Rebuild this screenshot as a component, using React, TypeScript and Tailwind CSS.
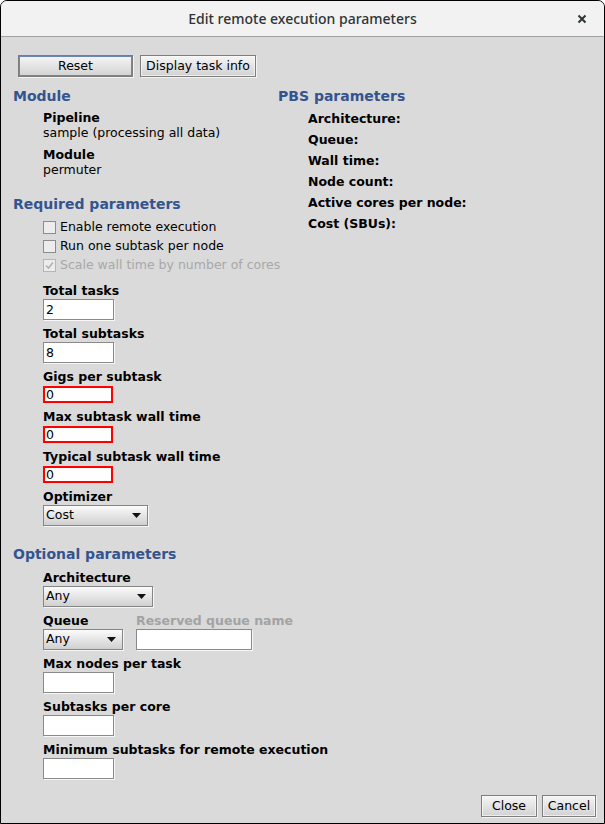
import React from "react";

const font = "font-['DejaVu_Sans','Liberation_Sans',sans-serif]";

function Heading({ children }: { children: React.ReactNode }) {
  return (
    <div className="h-[18px] leading-[18px] text-[14px] text-[#34548f] font-bold whitespace-nowrap">
      {children}
    </div>
  );
}

function Label({
  children,
  disabled,
  className = "",
}: {
  children: React.ReactNode;
  disabled?: boolean;
  className?: string;
}) {
  return (
    <div
      className={`h-[14px] leading-[14px] text-[12.5px] font-bold whitespace-nowrap ${
        disabled ? "text-[#a3a3a3]" : "text-black"
      } ${className}`}
    >
      {children}
    </div>
  );
}

function Button({ children, focused, className = "" }: { children: React.ReactNode; focused?: boolean; className?: string }) {
  return (
    <div
      className={`h-[22px] border border-[#7d7d7d] shadow-[1px_1px_0_#f4f4f4] bg-gradient-to-b from-[#f6f6f6] to-[#d2d2d2] flex items-center justify-center text-[12.5px] text-black whitespace-nowrap ${className}`}
    >
      <div
        className={`w-full h-full flex items-center justify-center ${
          focused ? "border border-[#6d86b8]" : "border border-[#fafafa]/70"
        }`}
      >
        {children}
      </div>
    </div>
  );
}

function TextBox({ value = "", w = "w-[71px]", error }: { value?: string; w?: string; error?: boolean }) {
  if (error) {
    return (
      <div className="mt-[2px] w-[70px] h-[17px] border-2 border-[#ff0000] bg-white text-[12.5px] leading-[13px] pl-[1px] text-black">
        {value}
      </div>
    );
  }
  return (
    <div
      className={`mt-[1px] ${w} h-[21px] border border-[#8a8a8a] shadow-[1px_1px_0_#f8f8f8] bg-white text-[12.5px] leading-[19px] pl-[2px] text-black`}
    >
      {value}
    </div>
  );
}

function Combo({ value, w }: { value: string; w: string }) {
  return (
    <div
      className={`mt-[1px] ${w} h-[21px] border border-[#858585] shadow-[1px_1px_0_#f6f6f6] bg-gradient-to-b from-[#fbfbfb] to-[#d0d0d0] flex items-center justify-between pl-[2px] pr-[6px] text-[12.5px] text-black`}
    >
      <span>{value}</span>
      <svg width="9" height="5" viewBox="0 0 9 5">
        <path d="M0 0h9L4.5 5z" fill="#111" />
      </svg>
    </div>
  );
}

function Check({ label, checked, disabled }: { label: string; checked?: boolean; disabled?: boolean }) {
  return (
    <div className="h-[19px] flex items-center whitespace-nowrap">
      <div
        className={`w-[13px] h-[13px] shrink-0 border ${
          disabled ? "border-[#b5b5b5]" : "border-[#8c8c8c]"
        } bg-[#ececec] flex items-center justify-center`}
      >
        {checked && (
          <svg width="11" height="11" viewBox="0 0 11 11">
            <path d="M2 5.5l2.5 2.5L9 2.5" stroke="#b0b0b0" strokeWidth="1.6" fill="none" />
          </svg>
        )}
      </div>
      <span className={`ml-[4px] text-[12.5px] ${disabled ? "text-[#a8a8a8]" : "text-black"}`}>{label}</span>
    </div>
  );
}

function Field({
  label,
  mt = "mt-[7px]",
  children,
}: {
  label: string;
  mt?: string;
  children: React.ReactNode;
}) {
  return (
    <div className={mt}>
      <Label>{label}</Label>
      {children}
    </div>
  );
}

const pbs = ["Architecture:", "Queue:", "Wall time:", "Node count:", "Active cores per node:", "Cost (SBUs):"];

export default function App() {
  return (
    <div
      className={`w-[605px] h-[824px] border border-black rounded-t-[7px] overflow-hidden bg-[#dadada] flex flex-col ${font}`}
    >
      <div className="h-[36px] shrink-0 bg-[#f2f2f2] border-b border-[#a2a2a2] relative flex items-center justify-center">
        <span className="font-['Noto_Sans',sans-serif] text-[14px] font-medium text-[#2e3436]">
          Edit remote execution parameters
        </span>
        <svg className="absolute right-[17px] top-[13px]" width="10" height="10" viewBox="0 0 10 10">
          <path d="M1.5 1.5l7 7M8.5 1.5l-7 7" stroke="#2e3436" strokeWidth="2" />
        </svg>
      </div>

      <div className="flex-1 flex flex-col">
        <div className="mt-[18px] ml-[17px] flex gap-[7px]">
          <Button focused className="w-[115px]">Reset</Button>
          <Button className="w-[116px]">Display task info</Button>
        </div>

        <div className="mt-[10px] ml-[12px] flex">
          <div className="w-[265px]">
            <Heading>Module</Heading>
            <div className="ml-[30px] mt-[5px]">
              <div className="h-[15px] leading-[15px] text-[12.5px] font-bold">Pipeline</div>
              <div className="h-[15px] leading-[15px] text-[12.5px]">sample (processing all data)</div>
              <div className="mt-[7px] h-[15px] leading-[15px] text-[12.5px] font-bold">Module</div>
              <div className="h-[15px] leading-[15px] text-[12.5px]">permuter</div>
            </div>

            <div className="mt-[18px]">
              <Heading>Required parameters</Heading>
            </div>
            <div className="ml-[30px] mt-[5px]">
              <Check label="Enable remote execution" />
              <Check label="Run one subtask per node" />
              <Check label="Scale wall time by number of cores" checked disabled />

              <Field label="Total tasks" mt="mt-[9px]">
                <TextBox value="2" />
              </Field>
              <Field label="Total subtasks">
                <TextBox value="8" />
              </Field>
              <Field label="Gigs per subtask">
                <TextBox value="0" error />
              </Field>
              <Field label="Max subtask wall time">
                <TextBox value="0" error />
              </Field>
              <Field label="Typical subtask wall time">
                <TextBox value="0" error />
              </Field>
              <Field label="Optimizer">
                <Combo value="Cost" w="w-[105px]" />
              </Field>
            </div>

            <div className="mt-[19px]">
              <Heading>Optional parameters</Heading>
            </div>
            <div className="ml-[30px]">
              <Field label="Architecture" mt="mt-[8px]">
                <Combo value="Any" w="w-[110px]" />
              </Field>
              <div className="mt-[7px] flex gap-[13px]">
                <div>
                  <Label>Queue</Label>
                  <Combo value="Any" w="w-[80px]" />
                </div>
                <div>
                  <Label disabled>Reserved queue name</Label>
                  <TextBox w="w-[116px]" />
                </div>
              </div>
              <Field label="Max nodes per task">
                <TextBox />
              </Field>
              <Field label="Subtasks per core">
                <TextBox />
              </Field>
              <Field label="Minimum subtasks for remote execution">
                <TextBox />
              </Field>
            </div>
          </div>

          <div>
            <Heading>PBS parameters</Heading>
            <div className="ml-[30px] mt-[3px]">
              {pbs.map((p) => (
                <div key={p} className="h-[21px] leading-[21px] text-[12.5px] font-bold">
                  {p}
                </div>
              ))}
            </div>
          </div>
        </div>

        <div className="mt-auto mb-[6px] mr-[8px] flex justify-end gap-[5px]">
          <Button className="w-[56px]">Close</Button>
          <Button className="w-[54px]">Cancel</Button>
        </div>
      </div>
    </div>
  );
}
